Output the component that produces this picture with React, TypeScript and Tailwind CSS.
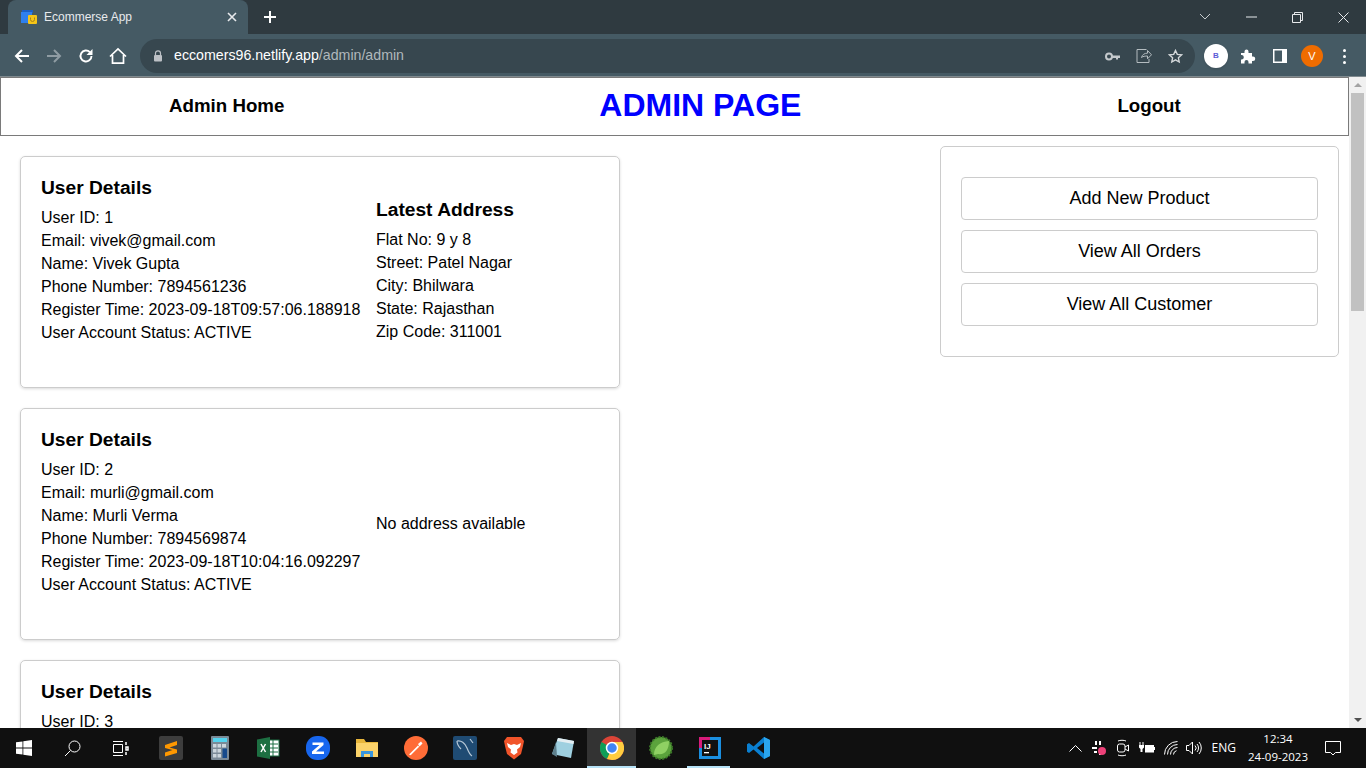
import React from "react";

const font = { fontFamily: '"Liberation Sans", Arial, sans-serif' };

function TabFavicon() {
  return (
    <svg width="16" height="16" viewBox="0 0 16 16">
      <rect x="1" y="1" width="11" height="3" fill="#1b5fc4" />
      <rect x="0" y="3" width="11" height="11" fill="#2f80ed" />
      <rect x="7" y="6" width="9" height="9" rx="1" fill="#f5c518" />
      <path d="M9.5 8.5v2a2 2 0 0 0 4 0v-2" fill="none" stroke="#a9821a" strokeWidth="1" />
    </svg>
  );
}

function Tabstrip() {
  return (
    <div className="flex h-[34px] bg-[#2f3a40] items-end">
      <div className="w-2 h-[34px] bg-[#2f3a40]" />
      <div className="w-[240px] h-[34px] mt-0 bg-[#455a64] rounded-t-[8px] flex items-center pl-[13px] pr-[10px]">
        <TabFavicon />
        <span className="ml-[7px] text-[12px] text-[#e8eaed] flex-1">Ecommerse App</span>
        <svg width="12" height="12" viewBox="0 0 12 12" stroke="#e8eaed" strokeWidth="1.6"><path d="M2 2l8 8M10 2l-8 8" /></svg>
      </div>
      <div className="w-[44px] h-[34px] flex items-center justify-center">
        <svg width="14" height="14" viewBox="0 0 14 14" stroke="#fff" strokeWidth="2"><path d="M7 1v12M1 7h12" /></svg>
      </div>
      <div className="flex-1" />
      <div className="flex h-[34px] items-center">
        <div className="w-[46px] flex justify-center">
          <svg width="12" height="8" viewBox="0 0 12 8" fill="none" stroke="#c6cbce" strokeWidth="1"><path d="M1 1l5 5 5-5" /></svg>
        </div>
        <div className="w-[46px] flex justify-center">
          <svg width="11" height="2" viewBox="0 0 11 2" stroke="#e8eaed"><path d="M0 1h11" /></svg>
        </div>
        <div className="w-[46px] flex justify-center">
          <svg width="11" height="11" viewBox="0 0 11 11" fill="none" stroke="#e8eaed"><path d="M.5 2.5h8v8h-8zM2.5 2.5v-2h8v8h-2" /></svg>
        </div>
        <div className="w-[46px] flex justify-center">
          <svg width="11" height="11" viewBox="0 0 11 11" stroke="#e8eaed"><path d="M.5.5l10 10M10.500.5l-10 10" /></svg>
        </div>
      </div>
    </div>
  );
}

function Toolbar() {
  return (
    <div className="flex h-[42px] pt-[2px] bg-[#455a64] items-center">
      <div className="w-[38px] flex justify-end pr-[8px]">
        <svg width="16" height="16" viewBox="0 0 16 16" fill="none" stroke="#fff" strokeWidth="2"><path d="M15 8H2M8 2L2 8l6 6" /></svg>
      </div>
      <div className="w-[32px] flex justify-center">
        <svg width="16" height="16" viewBox="0 0 16 16" fill="none" stroke="#8f9ca3" strokeWidth="2"><path d="M1 8h13M8 2l6 6-6 6" /></svg>
      </div>
      <div className="w-[32px] flex justify-center">
        <svg width="16" height="16" viewBox="0 0 16 16" fill="none"><path d="M13.500 8a5.500 5.500 0 1 1-1.600-3.900" stroke="#fff" strokeWidth="1.900" /><path d="M14.500 1v6h-6z" fill="#fff" /></svg>
      </div>
      <div className="w-[32px] flex justify-center">
        <svg width="18" height="18" viewBox="0 0 18 18" fill="none" stroke="#fff" strokeWidth="1.700"><path d="M1 9.500L9 2l8 7.500M3.500 8v8.200h11V8" /></svg>
      </div>
      <div className="ml-[6px] w-[1055px] h-[34px] rounded-full bg-[#37474f] flex items-center pl-[13px]">
        <svg width="10" height="12" viewBox="0 0 10 12"><path d="M2.500 5V3.300a2.500 2.500 0 0 1 5 0V5" fill="none" stroke="#bdc1c6" strokeWidth="1.200" /><rect x="1" y="5" width="8" height="6.500" rx="1" fill="#bdc1c6" /></svg>
        <span className="ml-[11px] text-[14.2px] text-white">eccomers96.netlify.app<span className="text-[#b0b8bc]">/admin/admin</span></span>
        <div className="flex-1" />
        <svg width="15" height="9" viewBox="0 0 15 9"><circle cx="4" cy="4.500" r="3" fill="none" stroke="#c4c9cc" strokeWidth="2" /><path d="M7 3.500h8v2.500h-2v1.500h-2V6H7z" fill="#c4c9cc" /></svg>
        <div className="ml-[16px]">
          <svg width="16" height="16" viewBox="0 0 16 16" fill="none" stroke="#b4bcc0" strokeWidth="1"><path d="M5.500 9.500c.8-3 3-4.300 6-4.300V2.500l4 4.300-4 4V8c-2.300 0-4.500.3-6 1.500zM10.500 1.500H1v13h12V11" /></svg>
        </div>
        <div className="ml-[16px]">
          <svg width="15" height="15" viewBox="0 0 15 15" fill="none" stroke="#d5d9db" strokeWidth="1.400"><path d="M7.500 1.500l1.800 3.900 4.200.5-3.100 2.900.8 4.200-3.700-2.100-3.700 2.100.8-4.200L1.500 5.900l4.200-.5z" /></svg>
        </div>
        <div className="w-[12px]" />
      </div>
      <div className="ml-[9px] w-[24px] h-[24px] rounded-full bg-white flex items-center justify-center shadow text-[8px] font-bold text-[#5b5bd6]">B</div>
      <div className="ml-[12px]">
        <svg width="16" height="16" viewBox="0 0 16 16" fill="#fff"><path d="M1 5h3.500V3.500a2 2 0 0 1 4 0V5H12v3.500h1a2.200 2.200 0 0 1 0 4.500h-1v2.500H8.500V14a2 2 0 0 0-4 0v1.500H1v-4h1a2.300 2.300 0 0 0 0-4.500H1z" /></svg>
      </div>
      <div className="ml-[17px]">
        <svg width="14" height="14" viewBox="0 0 14 14"><rect width="14" height="14" fill="#fff" /><rect x="1.500" y="1.500" width="7.500" height="11" fill="#455a64" /></svg>
      </div>
      <div className="ml-[14px] w-[22px] h-[22px] rounded-full bg-[#ef6c00] text-white text-[11px] flex items-center justify-center">V</div>
      <div className="ml-[20px] flex flex-col gap-[3px]">
        <div className="w-[3px] h-[3px] rounded-full bg-white" />
        <div className="w-[3px] h-[3px] rounded-full bg-white" />
        <div className="w-[3px] h-[3px] rounded-full bg-white" />
      </div>
    </div>
  );
}

function UserCard({ id, email, name, phone, time, address, partial }: { id: number; email?: string; name?: string; phone?: string; time?: string; address?: string[]; partial?: boolean }) {
  return (
    <div className="w-[600px] h-[232px] shrink-0 border border-[#cccccc] rounded-[5px] shadow-[0_1px_3px_rgba(0,0,0,0.15)] pl-[20px] pt-[18px] flex text-[16px] leading-[23px] text-black">
      <div className="w-[335px] shrink-0">
        <div className="text-[19.2px] font-bold leading-[26px] mb-[5px]">User Details</div>
        <div>User ID: {id}</div>
        {!partial && (
          <>
            <div>Email: {email}</div>
            <div>Name: {name}</div>
            <div>Phone Number: {phone}</div>
            <div>Register Time: {time}</div>
            <div>User Account Status: ACTIVE</div>
          </>
        )}
      </div>
      {address ? (
        <div className="pt-[22px]">
          <div className="text-[19.2px] font-bold leading-[26px] mb-[5px]">Latest Address</div>
          {address.map((l) => <div key={l}>{l}</div>)}
        </div>
      ) : partial ? null : (
        <div className="pt-[85px]">No address available</div>
      )}
    </div>
  );
}

function TaskIcon({ children, active, line }: { children: React.ReactNode; active?: boolean; line?: boolean }) {
  return (
    <div className={`w-[49px] h-[40px] flex items-center justify-center relative ${active ? "bg-[#333333]" : ""}`}>
      {children}
      {line && <div className={`absolute bottom-0 h-[2px] bg-[#b6e2f7] ${active ? "left-0 right-0" : "left-[2px] right-[4px]"}`} />}
    </div>
  );
}

function Taskbar() {
  return (
    <div className="flex h-[40px] bg-[#101010] items-center text-white">
      <div className="w-[48px] flex justify-center">
        <svg width="16" height="16" viewBox="0 0 16 16" fill="#fff"><path d="M0 2.300l6.500-.9v6.200H0zM7.300 1.300L16 0v7.600H7.300zM0 8.400h6.500v6.200L0 13.700zM7.300 8.400H16V16l-8.700-1.200z" /></svg>
      </div>
      <div className="w-[48px] flex justify-center">
        <svg width="17" height="17" viewBox="0 0 17 17" fill="none" stroke="#fff" strokeWidth="1"><circle cx="10.500" cy="6.500" r="5.500" /><path d="M6.500 10.500L1 16" /></svg>
      </div>
      <div className="w-[48px] flex justify-center">
        <svg width="17" height="15" viewBox="0 0 17 15" fill="none" stroke="#fff" strokeWidth="1"><path d="M1 .5h10M1 14.500h10M1.500 3.500h9v8h-9z" /><path d="M14 1v3M14 6v3h2V6zM14 11v3" strokeWidth="1.500" /></svg>
      </div>
      <div className="w-[2px]" />
      <TaskIcon>
        <div className="w-[24px] h-[24px] bg-[#3d3d3d] rounded-[2px] flex items-center justify-center">
          <svg width="14" height="17" viewBox="0 0 14 17" fill="#ff9800"><path d="M1 5L13 1v4L5.500 7.500 13 9.500v3.500L1 16.500v-4L8.500 10 1 8z" /></svg>
        </div>
      </TaskIcon>
      <TaskIcon>
        <svg width="18" height="24" viewBox="0 0 18 24"><rect width="18" height="24" rx="1" fill="#7b8a97" /><rect x="2" y="2" width="14" height="4" fill="#55d3ee" /><g fill="#cdd6dd"><rect x="2" y="8" width="3.500" height="3.500" /><rect x="6.500" y="8" width="3.500" height="3.500" /><rect x="2" y="13" width="3.500" height="3.500" /><rect x="6.500" y="13" width="3.500" height="3.500" /><rect x="2" y="18" width="3.500" height="3.500" /><rect x="6.500" y="18" width="3.500" height="3.500" /><rect x="11" y="8" width="4" height="3.500" /></g><rect x="11.500" y="12.500" width="4.500" height="9.500" fill="#174a8c" /></svg>
      </TaskIcon>
      <TaskIcon>
        <svg width="23" height="22" viewBox="0 0 23 22"><rect x="11" y="3" width="11" height="16" fill="#fff" stroke="#1d6f42" /><path d="M12 7h9M12 11h9M12 15h9M16 3v16" stroke="#1d6f42" strokeWidth="1" /><path d="M0 2.500L13 0v22L0 19.500z" fill="#1d6f42" /><path d="M4 7l4.500 8M8.500 7L4 15" stroke="#fff" strokeWidth="1.500" /></svg>
      </TaskIcon>
      <TaskIcon>
        <svg width="24" height="24" viewBox="0 0 24 24"><rect width="24" height="24" rx="11" fill="#1766ee" /><path d="M6.500 6.500h11v2.500L10 15.500h8V18H6v-2.500L13.500 9h-7z" fill="#fff" /></svg>
      </TaskIcon>
      <TaskIcon>
        <svg width="22" height="20" viewBox="0 0 22 20"><path d="M0 1h8l2 3h12v15H0z" fill="#e8b63b" /><path d="M0 5h22v14H0z" fill="#fcd36a" /><path d="M5 13h12v6h-3v-3H8v3H5z" fill="#3a96dd" /></svg>
      </TaskIcon>
      <TaskIcon>
        <svg width="24" height="24" viewBox="0 0 24 24"><circle cx="12" cy="12" r="12" fill="#ff6c37" /><path d="M5 18.500L14 9.500l1.200 1.200-8.500 8.500z" fill="#fff" /><path d="M14 8l3-2.500 1.500 2-3 3z" fill="#fff" /></svg>
      </TaskIcon>
      <TaskIcon>
        <svg width="24" height="24" viewBox="0 0 24 24"><rect width="24" height="24" rx="2" fill="#1f4b73" /><path d="M4 5c4-1 8 2 10 7s3 7 5 8M4 5c0 4 2 6 4 8M17 3l3 4" fill="none" stroke="#b7c9d8" strokeWidth="1.200" /></svg>
      </TaskIcon>
      <TaskIcon>
        <svg width="20" height="24" viewBox="0 0 20 24"><path d="M3 1h14l3 4-1 5-2 8-7 5.500L3 18 1 10 0 5z" fill="#f1542a" /><path d="M3 7l4 2 3-1 3 1 4-2-1 4-3 2.500.5 3L10 19l-3.500-2.500.5-3L4 11z" fill="#fff" /></svg>
      </TaskIcon>
      <TaskIcon>
        <svg width="24" height="22" viewBox="0 0 24 22"><path d="M7 1l16 3-3 17L1 17z" fill="#9fd0e0" /><path d="M7 1l16 3-.5 3L6 4z" fill="#e4eef2" /><path d="M1 17l4-12 1 15z" fill="#5d7f8c" /></svg>
      </TaskIcon>
      <TaskIcon active line>
        <svg width="24" height="24" viewBox="0 0 24 24"><circle cx="12" cy="12" r="12" fill="#db4437" /><path d="M12 12L1.600 6A12 12 0 0 0 7 23z" fill="#0f9d58" /><path d="M12 6h10.400A12 12 0 0 1 12 24L7 23l5-11z" fill="#ffcd40" /><circle cx="12" cy="12" r="5.500" fill="#4285f4" stroke="#fff" strokeWidth="1.500" /></svg>
      </TaskIcon>
      <TaskIcon>
        <svg width="24" height="24" viewBox="0 0 24 24"><circle cx="12" cy="12" r="11" fill="#5ba33c" stroke="#3c7a28" strokeWidth="2" strokeDasharray="2 1.500" /><path d="M5 19C5 10 11 6 20 5c0 9-4 14-11 13z" fill="#8fd163" /></svg>
      </TaskIcon>
      <TaskIcon line>
        <svg width="22" height="22" viewBox="0 0 22 22"><rect width="22" height="22" fill="#1b8fe0" /><rect x="0" y="0" width="11" height="11" fill="#d81b7a" /><rect x="3" y="3" width="16" height="16" fill="#111" /><text x="5" y="12" fontSize="8" fontWeight="700" fill="#fff" fontFamily="Liberation Sans">IJ</text><rect x="5" y="15" width="5" height="1.300" fill="#fff" /></svg>
      </TaskIcon>
      <TaskIcon>
        <svg width="24" height="24" viewBox="0 0 24 24"><path d="M17 1l6 3v16l-6 3L6.500 13.500 2 17l-2-1.200V8.200L2 7l4.500 3.500z" fill="#0a7fd1" /><path d="M17 6.500v11L10 12z" fill="#101010" /><path d="M17 1l6 3v16l-6 3z" fill="#2aa5ee" /></svg>
      </TaskIcon>
      <div className="flex-1" />
      <div className="flex items-center">
        <svg width="13" height="7" viewBox="0 0 13 7" fill="none" stroke="#fff"><path d="M.5 6.500l6-6 6 6" /></svg>
        <div className="ml-[10px]">
          <svg width="14" height="14" viewBox="0 0 14 14"><path d="M3 0h2v4H3zM7 0h2v4H7zM0 6h5v2H0zM2 10h3v2H2zM7 10h2v4H7z" fill="#fff" /><circle cx="10" cy="10" r="4" fill="#ec4078" /></svg>
        </div>
        <div className="ml-[11px]">
          <svg width="12" height="18" viewBox="0 0 12 18" fill="none" stroke="#fff"><path d="M1 2c2-1 6-1 8 0M1 16c2 1 6 1 8 0" /><rect x=".5" y="5" width="7.500" height="8" rx="2" /><path d="M8 8l3.500-2v6L8 10" /></svg>
        </div>
        <div className="ml-[10px]">
          <svg width="16" height="12" viewBox="0 0 16 12"><path d="M1 0v3M4 0v3" stroke="#fff" /><path d="M0 3h5v2.500L3.500 7v3h-2V7L0 5.500z" fill="#fff" /><rect x="6.500" y="3.500" width="8" height="6.500" fill="#fff" stroke="#fff" /><rect x="15" y="5" width="1" height="3" fill="#fff" /></svg>
        </div>
        <div className="ml-[9px]">
          <svg width="14" height="14" viewBox="0 0 14 14" fill="none" stroke="#fff"><path d="M.5 13.500a13 13 0 0 1 13-13M3.500 13.500a10 10 0 0 1 10-10M6.500 13.500a7 7 0 0 1 7-7M9.500 13.500a4 4 0 0 1 3-3.800" /></svg>
        </div>
        <div className="ml-[8px]">
          <svg width="16" height="14" viewBox="0 0 16 14" fill="none" stroke="#fff"><path d="M.5 4.500h2.500L6.500 1v12L3 9.500H.5zM9 4.500a3.500 3.500 0 0 1 0 5M11 3a6 6 0 0 1 0 8M13 1a9 9 0 0 1 0 12" /></svg>
        </div>
        <span className="ml-[10px] text-[12px] whitespace-nowrap" style={{ fontFamily: '"Open Sans", sans-serif' }}>ENG</span>
        <div className="ml-[11px] w-[62px] flex flex-col items-center text-[11.5px] leading-[18px] whitespace-nowrap" style={{ fontFamily: '"Open Sans", sans-serif' }}>
          <span>12:34</span>
          <span>24-09-2023</span>
        </div>
        <div className="ml-[16px] mr-[25px]">
          <svg width="16" height="15" viewBox="0 0 16 15" fill="none" stroke="#fff"><path d="M.5.500h15v11h-5L8 14l-2.500-2.500h-5z" /></svg>
        </div>
      </div>
    </div>
  );
}

export default function App() {
  return (
    <div className="w-[1366px] h-[768px] overflow-hidden flex flex-col bg-white" style={font}>
      <Tabstrip />
      <Toolbar />
      <div className="h-[1px] bg-[#7f8a8f]" />
      <div className="flex flex-1 min-h-0">
        <div className="w-[1349px] flex flex-col overflow-hidden">
          <div className="h-[59px] shrink-0 border border-[#7a7a7a] flex items-center font-bold text-black">
            <span className="ml-[168px] text-[18.72px]">Admin Home</span>
            <span className="ml-[315px] mb-[3px] text-[32px] text-[#0000ff]">ADMIN PAGE</span>
            <span className="ml-[316px] text-[18.72px]">Logout</span>
          </div>
          <div className="flex flex-1 min-h-0">
            <div className="w-[940px] shrink-0 pl-[20px] pt-[20px] flex flex-col gap-[20px]">
              <UserCard id={1} email="vivek@gmail.com" name="Vivek Gupta" phone="7894561236" time="2023-09-18T09:57:06.188918"
                address={["Flat No: 9 y 8", "Street: Patel Nagar", "City: Bhilwara", "State: Rajasthan", "Zip Code: 311001"]} />
              <UserCard id={2} email="murli@gmail.com" name="Murli Verma" phone="7894569874" time="2023-09-18T10:04:16.092297" />
              <UserCard id={3} partial />
            </div>
            <div className="pt-[10px]">
              <div className="w-[399px] h-[211px] border border-[#cccccc] rounded-[5px] px-[20px] pt-[30px] flex flex-col gap-[10px]">
                {["Add New Product", "View All Orders", "View All Customer"].map((t) => (
                  <div key={t} className="h-[43px] border border-[#cccccc] rounded-[4px] flex items-center justify-center text-[18px] text-black">{t}</div>
                ))}
              </div>
            </div>
          </div>
        </div>
        <div className="w-[17px] bg-[#f1f1f1] flex flex-col items-center">
          <div className="h-[16px] flex items-center justify-center">
            <div className="w-0 h-0 border-l-[4px] border-r-[4px] border-b-[4px] border-l-transparent border-r-transparent border-b-[#a3a3a3]" />
          </div>
          <div className="w-[13px] h-[218px] bg-[#c1c1c1]" />
          <div className="flex-1" />
          <div className="h-[16px] flex items-center justify-center">
            <div className="w-0 h-0 border-l-[4px] border-r-[4px] border-t-[4px] border-l-transparent border-r-transparent border-t-[#505050]" />
          </div>
        </div>
      </div>
      <Taskbar />
    </div>
  );
}
